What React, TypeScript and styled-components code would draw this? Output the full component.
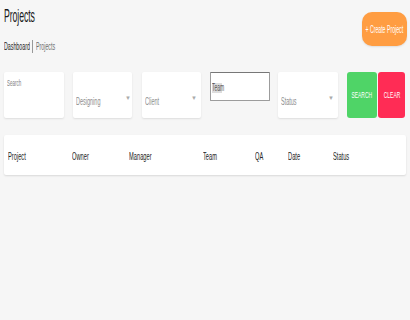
import React from "react";
import styled, { createGlobalStyle } from "styled-components";

const Global = createGlobalStyle`
  html, body { margin: 0; padding: 0; background: #f6f6f6; }
  body { font-family: "Liberation Sans", Arial, sans-serif; }
  #root { min-height: 320px; }
`;

const Page = styled.div`
  padding: 0 4px;
  box-sizing: border-box;
  width: 410px;
`;

const Squeeze = styled.span<{ $origin?: string; $scale?: number }>`
  display: inline-block;
  white-space: nowrap;
  transform: scaleX(${(p) => p.$scale ?? 0.5});
  transform-origin: ${(p) => p.$origin ?? "left center"};
`;

const Header = styled.div`
  display: flex;
  justify-content: space-between;
  align-items: flex-start;
  height: 72px;
`;

const TitleBlock = styled.div`
  display: flex;
  flex-direction: column;
  padding-top: 4px;
`;

const Title = styled.h1`
  margin: 0;
  font-size: 19px;
  line-height: 24px;
  font-weight: 500;
  color: #1a1a1a;
  letter-spacing: -0.2px;
`;

const Crumbs = styled.div`
  display: flex;
  align-items: center;
  margin-top: 11px;
  font-size: 11px;
  line-height: 14px;
`;

const Crumb = styled.span<{ $active?: boolean }>`
  color: ${(p) => (p.$active ? "#222" : "#6e6e6e")};
`;

const Sep = styled.span`
  display: inline-block;
  width: 1px;
  height: 13px;
  background: #999;
  margin: 0 3px 0 -26px;
`;

const CreateButton = styled.button`
  margin-top: 12px;
  margin-right: -1px;
  width: 45px;
  height: 34px;
  border: none;
  border-radius: 10px;
  background: #ff9d42;
  color: #fff;
  font-family: inherit;
  font-size: 10px;
  padding: 0;
  display: flex;
  align-items: center;
  justify-content: center;
  box-shadow: 0 1px 2px rgba(0,0,0,0.1);
`;

const Filters = styled.div`
  display: flex;
  align-items: flex-start;
  height: 63px;
`;

const Card = styled.div<{ $w: number; $ml?: number }>`
  width: ${(p) => p.$w}px;
  margin-left: ${(p) => p.$ml ?? 0}px;
  height: 46px;
  background: #fff;
  border-radius: 2px;
  box-shadow: 0 1px 2px rgba(0,0,0,0.1);
  box-sizing: border-box;
`;

const SearchPh = styled.div`
  padding: 6px 0 0 3px;
  font-size: 9px;
  color: #808080;
`;

const SelectBox = styled(Card)`
  display: flex;
  align-items: flex-end;
  justify-content: space-between;
  padding: 0 4px 11px 3px;
`;

const SelectText = styled.span`
  font-size: 11px;
  color: #8c8c8c;
  line-height: 12px;
`;

const Caret = styled.span`
  font-size: 6px;
  color: #aaa;
  margin-bottom: 6px;
`;

const TeamInput = styled.div<{ $ml: number }>`
  width: 60px;
  height: 29px;
  margin-left: ${(p) => p.$ml}px;
  background: #fff;
  border: 1px solid #9c9c9c;
  border-top-color: #777;
  border-radius: 1px;
  box-sizing: border-box;
  display: flex;
  align-items: center;
  padding-left: 1px;
  padding-top: 2px;
`;

const TeamText = styled.span`
  font-size: 10px;
  color: #555;
  background: #ddd;
  width: 10px;
  overflow: visible;
  line-height: 10px;
`;

const ActionButton = styled.button<{ $bg: string; $w: number; $ml: number }>`
  width: ${(p) => p.$w}px;
  margin-left: ${(p) => p.$ml}px;
  height: 46px;
  border: none;
  border-radius: 3px;
  background: ${(p) => p.$bg};
  color: #fff;
  font-family: inherit;
  font-size: 9px;
  padding: 0;
  display: flex;
  align-items: center;
  justify-content: center;
`;

const Table = styled.div`
  height: 40px;
  background: #fff;
  border-radius: 2px;
  box-shadow: 0 1px 2px rgba(0,0,0,0.12);
  display: grid;
  grid-template-columns: 64px 57px 74px 52px 33px 45px 1fr;
  align-items: center;
  padding-left: 4px;
  font-size: 11px;
  color: #222;
`;

const Th = styled.div`
  padding-top: 2px;
`;

const cols = ["Project", "Owner", "Manager", "Team", "QA", "Date", "Status"];

export default function App() {
  return (
    <>
      <Global />
      <Page>
        <Header>
          <TitleBlock>
            <Title>
              <Squeeze $scale={0.46}>Projects</Squeeze>
            </Title>
            <Crumbs>
              <Crumb $active>
                <Squeeze $scale={0.48}>Dashboard</Squeeze>
              </Crumb>
              <Sep />
              <Crumb>
                <Squeeze $scale={0.48}>Projects</Squeeze>
              </Crumb>
            </Crumbs>
          </TitleBlock>
          <CreateButton>
            <Squeeze $origin="center" $scale={0.52}>+ Create Project</Squeeze>
          </CreateButton>
        </Header>
        <Filters>
          <Card $w={60}>
            <SearchPh>
              <Squeeze $scale={0.5}>Search</Squeeze>
            </SearchPh>
          </Card>
          <SelectBox $w={59} $ml={9}>
            <SelectText>
              <Squeeze $scale={0.5}>Designing</Squeeze>
            </SelectText>
            <Caret>▼</Caret>
          </SelectBox>
          <SelectBox $w={59} $ml={10}>
            <SelectText>
              <Squeeze $scale={0.5}>Client</Squeeze>
            </SelectText>
            <Caret>▼</Caret>
          </SelectBox>
          <TeamInput $ml={9}>
            <TeamText>
              <Squeeze $scale={0.5}>Team</Squeeze>
            </TeamText>
          </TeamInput>
          <SelectBox $w={60} $ml={8}>
            <SelectText>
              <Squeeze $scale={0.5}>Status</Squeeze>
            </SelectText>
            <Caret>▼</Caret>
          </SelectBox>
          <ActionButton $bg="#4fd467" $w={30} $ml={9}>
            <Squeeze $origin="center" $scale={0.55}>SEARCH</Squeeze>
          </ActionButton>
          <ActionButton $bg="#ff2c55" $w={27} $ml={1}>
            <Squeeze $origin="center" $scale={0.55}>CLEAR</Squeeze>
          </ActionButton>
        </Filters>
        <Table>
          {cols.map((c) => (
            <Th key={c}>
              <Squeeze $scale={0.52}>{c}</Squeeze>
            </Th>
          ))}
        </Table>
      </Page>
    </>
  );
}
